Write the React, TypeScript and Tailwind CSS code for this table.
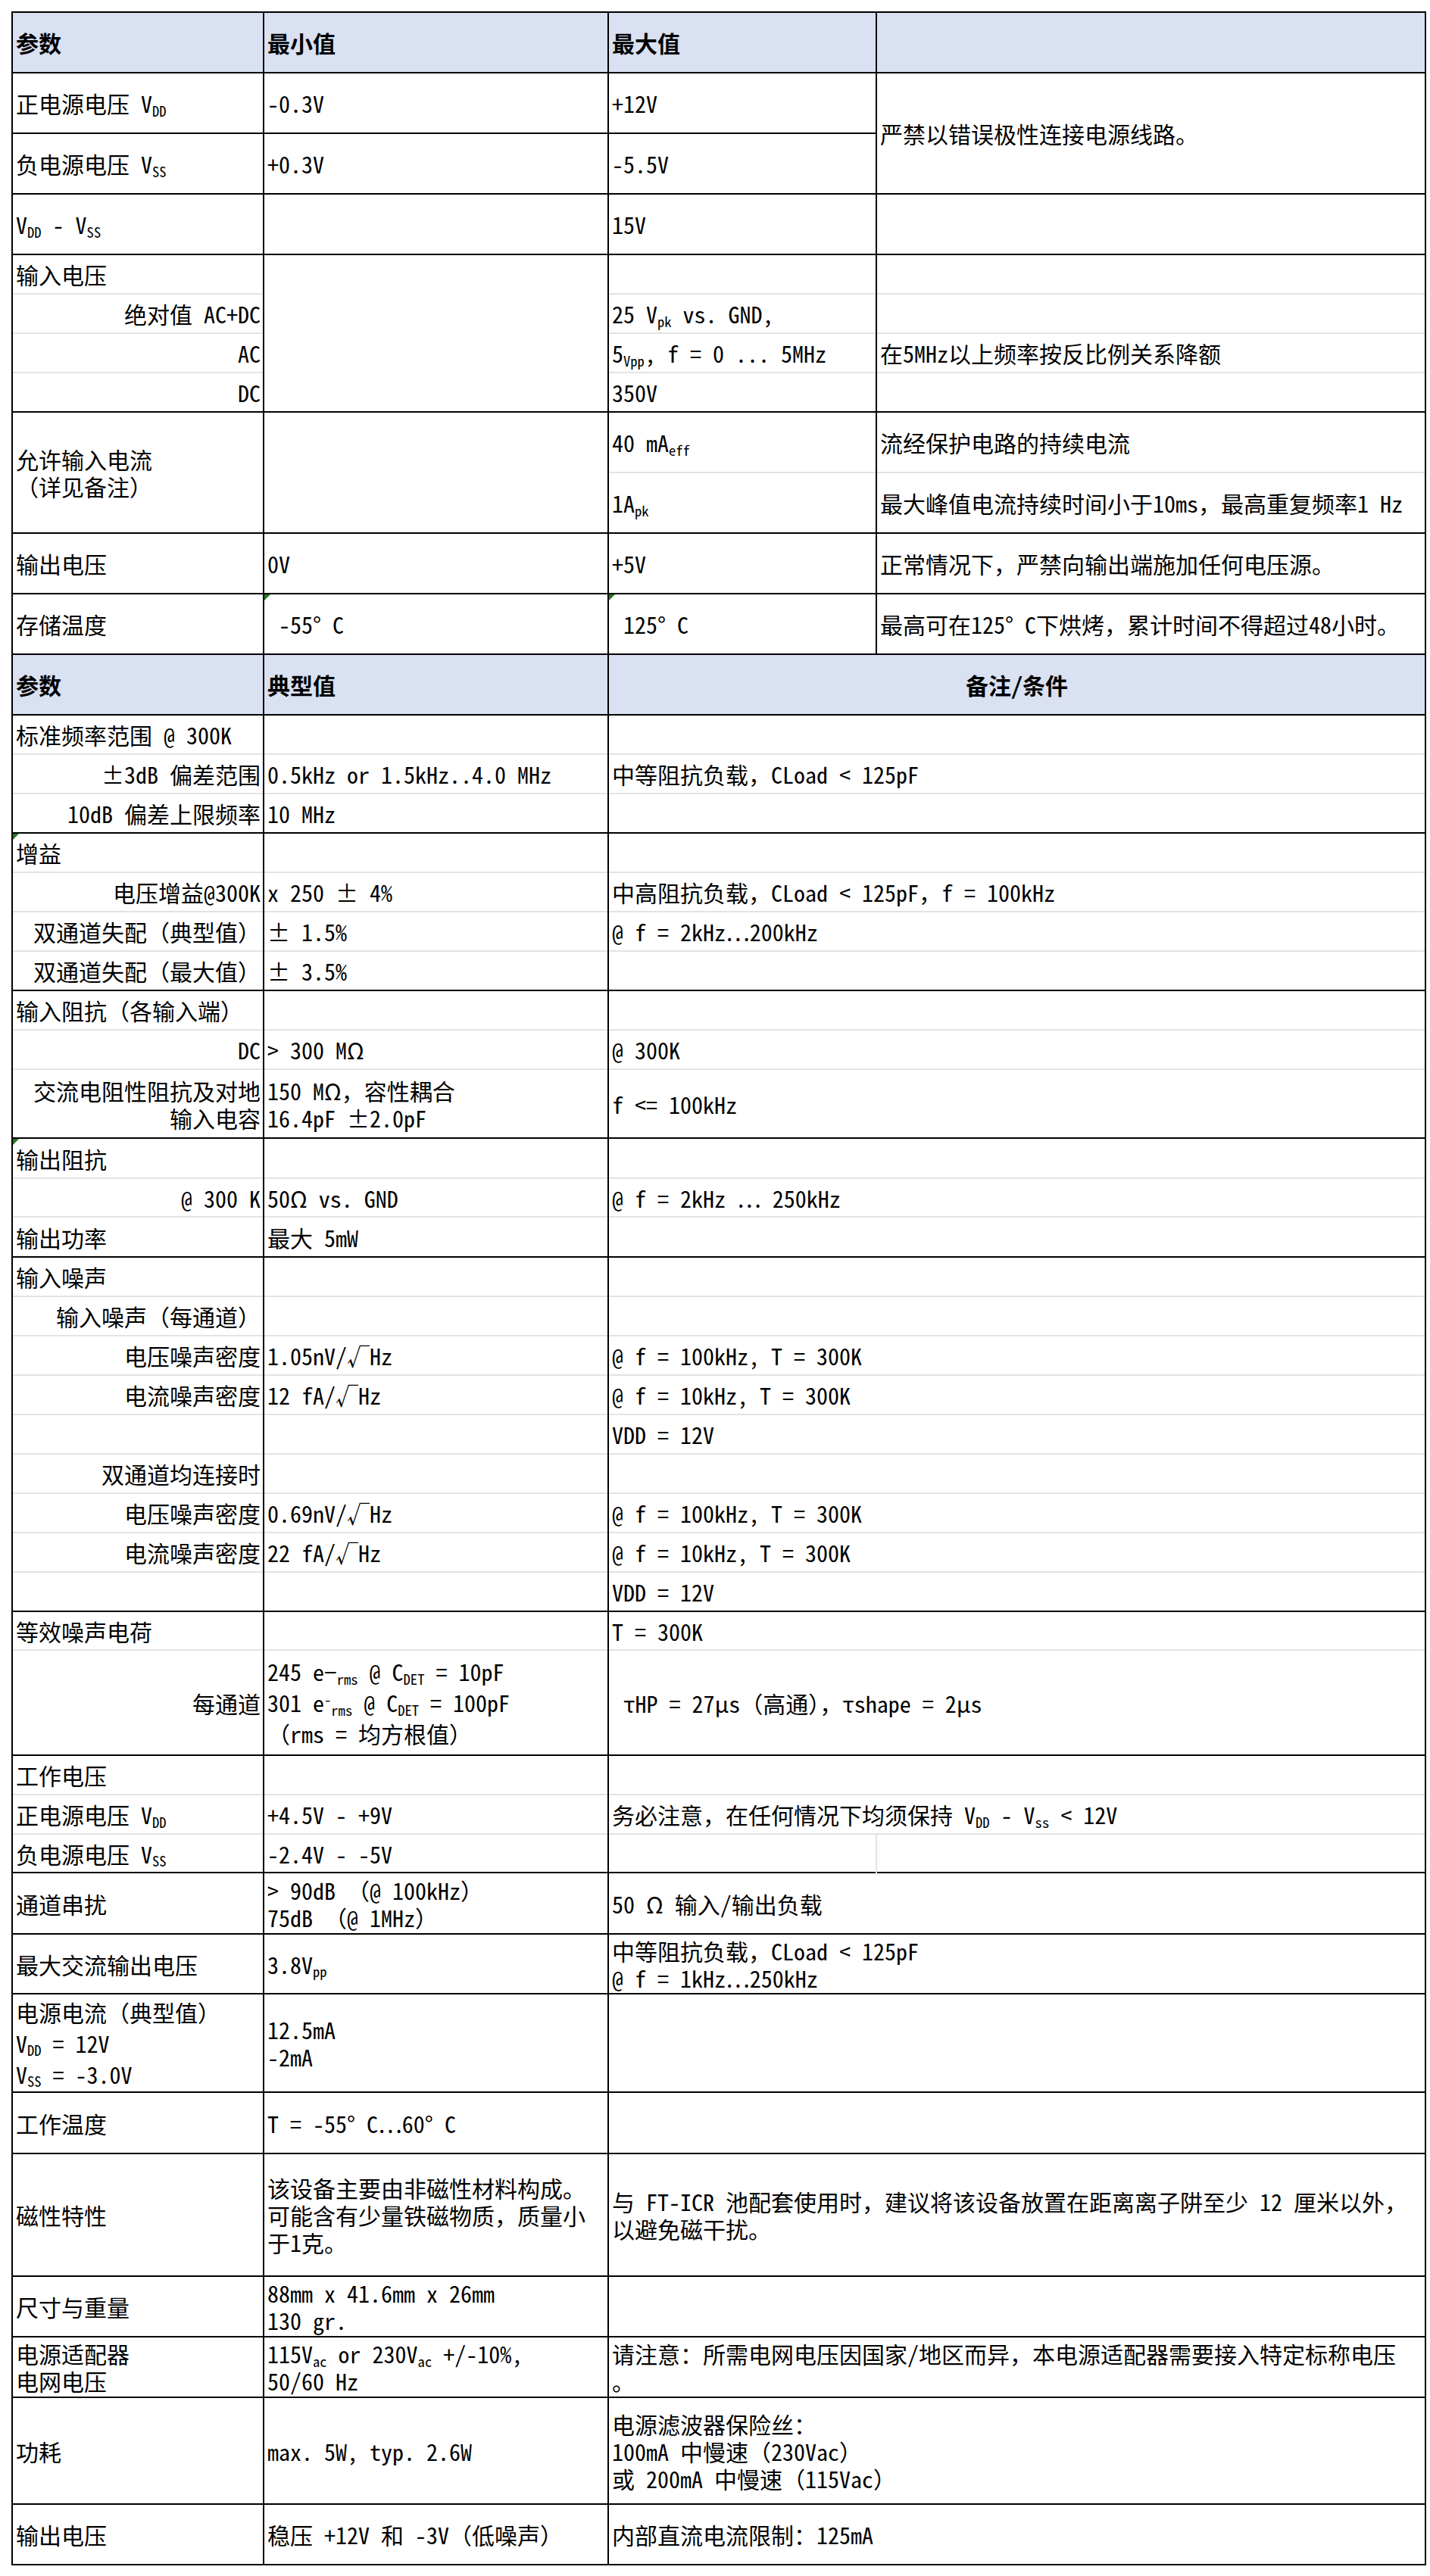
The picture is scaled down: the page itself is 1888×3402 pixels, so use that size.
import React from "react";

type TdProps = {
  children?: React.ReactNode;
  t?: "k" | "g" | "n";
  l?: boolean;
  lg?: boolean;
  r?: boolean;
  b?: boolean;
  a?: "l" | "r" | "c";
  rs?: number;
  cs?: number;
  tri?: boolean;
  hd?: boolean;
  lh?: string;
};

function Td({ children, t = "k", l = true, lg = false, r = false, b = false, a = "l", rs, cs, tri, hd, lh }: TdProps) {
  const cls = [
    "relative p-0 align-middle whitespace-pre",
    lh ? lh : "leading-[36px]",
    t === "k" ? "border-t-2 border-t-black" : t === "g" ? "border-t-2 border-t-[#e3e3e3]" : "",
    l ? (lg ? "border-l-2 border-l-[#e3e3e3]" : "border-l-2 border-l-black") : "",
    r ? "border-r-2 border-r-black" : "",
    b ? "border-b-2 border-b-black" : "",
    a === "r" ? "text-right pr-[3px] pl-[4px]" : a === "c" ? "text-center" : "text-left pl-[4px] pr-[2px]",
    hd ? "bg-[#d9e1f2] font-bold" : "",
  ].join(" ");
  return (
    <td className={cls} rowSpan={rs} colSpan={cs}>
      {tri ? (
        <span className="absolute left-0 top-0 w-0 h-0 border-t-[8px] border-t-[#1f7a1f] border-r-[8px] border-r-transparent" />
      ) : null}
      {children}
    </td>
  );
}

const S = ({ children }: { children: React.ReactNode }) => <sub className="text-[0.62em]">{children}</sub>;
const U = ({ children }: { children: React.ReactNode }) => <sup className="text-[0.62em]">{children}</sup>;

export default function App() {
  return (
    <div className="w-[1888px] min-h-[3402px] bg-white pt-[15px] pl-[15px] text-black text-[30px] font-['Noto_Sans_Mono_CJK_SC','Noto_Sans_CJK_SC',monospace]">
      <table className="border-collapse table-fixed w-[1866px]">
        <colgroup>
          <col className="w-[332px]" />
          <col className="w-[455px]" />
          <col className="w-[354px]" />
          <col className="w-[725px]" />
        </colgroup>
        <tbody>
          {/* Table 1 header */}
          <tr className="h-[80px]">
            <Td hd>参数</Td>
            <Td hd>最小值</Td>
            <Td hd>最大值</Td>
            <Td hd r></Td>
          </tr>
          <tr className="h-[80px]">
            <Td>正电源电压 V<S>DD</S></Td>
            <Td>-0.3V</Td>
            <Td>+12V</Td>
            <Td rs={2} r>严禁以错误极性连接电源线路。</Td>
          </tr>
          <tr className="h-[80px]">
            <Td>负电源电压 V<S>SS</S></Td>
            <Td>+0.3V</Td>
            <Td>-5.5V</Td>
          </tr>
          <tr className="h-[80px]">
            <Td>V<S>DD</S> - V<S>SS</S></Td>
            <Td></Td>
            <Td>15V</Td>
            <Td r></Td>
          </tr>
          {/* 输入电压 */}
          <tr className="h-[52px]">
            <Td>输入电压</Td>
            <Td rs={4}></Td>
            <Td></Td>
            <Td r></Td>
          </tr>
          <tr className="h-[52px]">
            <Td t="g" a="r">绝对值 AC+DC</Td>
            <Td t="g">25 V<S>pk</S> vs. GND,</Td>
            <Td t="g" r></Td>
          </tr>
          <tr className="h-[52px]">
            <Td t="g" a="r">AC</Td>
            <Td t="g">5<S>Vpp</S>, f = 0 ... 5MHz</Td>
            <Td t="g" r>在5MHz以上频率按反比例关系降额</Td>
          </tr>
          <tr className="h-[52px]">
            <Td t="g" a="r">DC</Td>
            <Td t="g">350V</Td>
            <Td t="g" r></Td>
          </tr>
          {/* 允许输入电流 */}
          <tr className="h-[80px]">
            <Td rs={2}>{"允许输入电流\n（详见备注）"}</Td>
            <Td rs={2}></Td>
            <Td>40 mA<S>eff</S></Td>
            <Td r>流经保护电路的持续电流</Td>
          </tr>
          <tr className="h-[80px]">
            <Td t="g">1A<S>pk</S></Td>
            <Td t="g" r>最大峰值电流持续时间小于10ms，最高重复频率1 Hz</Td>
          </tr>
          <tr className="h-[80px]">
            <Td>输出电压</Td>
            <Td>0V</Td>
            <Td>+5V</Td>
            <Td r>正常情况下，严禁向输出端施加任何电压源。</Td>
          </tr>
          <tr className="h-[80px]">
            <Td>存储温度</Td>
            <Td tri> -55° C</Td>
            <Td tri> 125° C</Td>
            <Td r>最高可在125° C下烘烤，累计时间不得超过48小时。</Td>
          </tr>

          {/* Table 2 header */}
          <tr className="h-[80px]">
            <Td hd>参数</Td>
            <Td hd>典型值</Td>
            <Td hd cs={2} a="c" r>备注/条件</Td>
          </tr>
          {/* 标准频率范围 */}
          <tr className="h-[52px]">
            <Td>标准频率范围 @ 300K</Td>
            <Td></Td>
            <Td cs={2} r></Td>
          </tr>
          <tr className="h-[52px]">
            <Td t="g" a="r">±3dB 偏差范围</Td>
            <Td t="g">0.5kHz or 1.5kHz..4.0 MHz</Td>
            <Td t="g" cs={2} r>中等阻抗负载，CLoad &lt; 125pF</Td>
          </tr>
          <tr className="h-[52px]">
            <Td t="g" a="r">10dB 偏差上限频率</Td>
            <Td t="g">10 MHz</Td>
            <Td t="g" cs={2} r></Td>
          </tr>
          {/* 增益 */}
          <tr className="h-[52px]">
            <Td tri>增益</Td>
            <Td></Td>
            <Td cs={2} r></Td>
          </tr>
          <tr className="h-[52px]">
            <Td t="g" a="r">电压增益@300K</Td>
            <Td t="g">x 250 ± 4%</Td>
            <Td t="g" cs={2} r>中高阻抗负载，CLoad &lt; 125pF，f = 100kHz</Td>
          </tr>
          <tr className="h-[52px]">
            <Td t="g" a="r">双通道失配（典型值）</Td>
            <Td t="g">± 1.5%</Td>
            <Td t="g" cs={2} r>@ f = 2kHz…200kHz</Td>
          </tr>
          <tr className="h-[52px]">
            <Td t="g" a="r">双通道失配（最大值）</Td>
            <Td t="g">± 3.5%</Td>
            <Td t="g" cs={2} r></Td>
          </tr>
          {/* 输入阻抗 */}
          <tr className="h-[52px]">
            <Td>输入阻抗（各输入端）</Td>
            <Td></Td>
            <Td cs={2} r></Td>
          </tr>
          <tr className="h-[52px]">
            <Td t="g" a="r">DC</Td>
            <Td t="g">&gt; 300 MΩ</Td>
            <Td t="g" cs={2} r>@ 300K</Td>
          </tr>
          <tr className="h-[91px]">
            <Td t="g" a="r">{"交流电阻性阻抗及对地\n输入电容"}</Td>
            <Td t="g">{"150 MΩ，容性耦合\n16.4pF ±2.0pF"}</Td>
            <Td t="g" cs={2} r>f &lt;= 100kHz</Td>
          </tr>
          {/* 输出阻抗 */}
          <tr className="h-[53px]">
            <Td tri>输出阻抗</Td>
            <Td></Td>
            <Td cs={2} r></Td>
          </tr>
          <tr className="h-[51px]">
            <Td t="g" a="r">@ 300 K</Td>
            <Td t="g">50Ω vs. GND</Td>
            <Td t="g" cs={2} r>@ f = 2kHz … 250kHz</Td>
          </tr>
          <tr className="h-[53px]">
            <Td t="g">输出功率</Td>
            <Td t="g">最大 5mW</Td>
            <Td t="g" cs={2} r></Td>
          </tr>
          {/* 输入噪声 */}
          <tr className="h-[52px]">
            <Td>输入噪声</Td>
            <Td></Td>
            <Td cs={2} r></Td>
          </tr>
          <tr className="h-[52px]">
            <Td t="g" a="r">输入噪声（每通道）</Td>
            <Td t="g"></Td>
            <Td t="g" cs={2} r></Td>
          </tr>
          <tr className="h-[52px]">
            <Td t="g" a="r">电压噪声密度</Td>
            <Td t="g">1.05nV/√Hz</Td>
            <Td t="g" cs={2} r>@ f = 100kHz, T = 300K</Td>
          </tr>
          <tr className="h-[52px]">
            <Td t="g" a="r">电流噪声密度</Td>
            <Td t="g">12 fA/√Hz</Td>
            <Td t="g" cs={2} r>@ f = 10kHz, T = 300K</Td>
          </tr>
          <tr className="h-[52px]">
            <Td t="g"></Td>
            <Td t="g"></Td>
            <Td t="g" cs={2} r>VDD = 12V</Td>
          </tr>
          <tr className="h-[52px]">
            <Td t="g" a="r">双通道均连接时</Td>
            <Td t="g"></Td>
            <Td t="g" cs={2} r></Td>
          </tr>
          <tr className="h-[52px]">
            <Td t="g" a="r">电压噪声密度</Td>
            <Td t="g">0.69nV/√Hz</Td>
            <Td t="g" cs={2} r>@ f = 100kHz, T = 300K</Td>
          </tr>
          <tr className="h-[52px]">
            <Td t="g" a="r">电流噪声密度</Td>
            <Td t="g">22 fA/√Hz</Td>
            <Td t="g" cs={2} r>@ f = 10kHz, T = 300K</Td>
          </tr>
          <tr className="h-[52px]">
            <Td t="g"></Td>
            <Td t="g"></Td>
            <Td t="g" cs={2} r>VDD = 12V</Td>
          </tr>
          {/* 等效噪声电荷 */}
          <tr className="h-[51px]">
            <Td>等效噪声电荷</Td>
            <Td></Td>
            <Td cs={2} r>T = 300K</Td>
          </tr>
          <tr className="h-[139px]">
            <Td t="g" a="r">每通道</Td>
            <Td t="g" lh="leading-[41px]">
              245 e−<S>rms</S> @ C<S>DET</S> = 10pF{"\n"}301 e<U>-</U><S>rms</S> @ C<S>DET</S> = 100pF{"\n"}（rms = 均方根值）
            </Td>
            <Td t="g" cs={2} r> τHP = 27μs（高通），τshape = 2μs</Td>
          </tr>
          {/* 工作电压 */}
          <tr className="h-[52px]">
            <Td>工作电压</Td>
            <Td></Td>
            <Td cs={2} r></Td>
          </tr>
          <tr className="h-[52px]">
            <Td t="g">正电源电压 V<S>DD</S></Td>
            <Td t="g">+4.5V - +9V</Td>
            <Td t="g" cs={2} r>务必注意，在任何情况下均须保持 V<S>DD</S> - V<S>ss</S> &lt; 12V</Td>
          </tr>
          <tr className="h-[51px]">
            <Td t="g">负电源电压 V<S>SS</S></Td>
            <Td t="g">-2.4V - -5V</Td>
            <Td t="g"></Td>
            <Td t="g" lg r></Td>
          </tr>
          <tr className="h-[81px]">
            <Td>通道串扰</Td>
            <Td>{"> 90dB （@ 100kHz）\n75dB （@ 1MHz）"}</Td>
            <Td cs={2} r>50 Ω 输入/输出负载</Td>
          </tr>
          <tr className="h-[79px]">
            <Td>最大交流输出电压</Td>
            <Td>3.8V<S>pp</S></Td>
            <Td cs={2} r>{"中等阻抗负载，CLoad < 125pF\n@ f = 1kHz…250kHz"}</Td>
          </tr>
          <tr className="h-[130px]">
            <Td lh="leading-[41px]">
              电源电流（典型值）{"\n"}V<S>DD</S> = 12V{"\n"}V<S>SS</S> = -3.0V
            </Td>
            <Td>{"12.5mA\n-2mA"}</Td>
            <Td cs={2} r></Td>
          </tr>
          <tr className="h-[81px]">
            <Td>工作温度</Td>
            <Td>T = -55° C…60° C</Td>
            <Td cs={2} r></Td>
          </tr>
          <tr className="h-[162px]">
            <Td>磁性特性</Td>
            <Td>{"该设备主要由非磁性材料构成。\n可能含有少量铁磁物质，质量小\n于1克。"}</Td>
            <Td cs={2} r>{"与 FT-ICR 池配套使用时，建议将该设备放置在距离离子阱至少 12 厘米以外，\n以避免磁干扰。"}</Td>
          </tr>
          <tr className="h-[80px]">
            <Td>尺寸与重量</Td>
            <Td>{"88mm x 41.6mm x 26mm\n130 gr."}</Td>
            <Td cs={2} r></Td>
          </tr>
          <tr className="h-[80px]">
            <Td>{"电源适配器\n电网电压"}</Td>
            <Td>
              115V<S>ac</S> or 230V<S>ac</S> +/-10%,{"\n"}50/60 Hz
            </Td>
            <Td cs={2} r>{"请注意：所需电网电压因国家/地区而异，本电源适配器需要接入特定标称电压\n。"}</Td>
          </tr>
          <tr className="h-[141px]">
            <Td>功耗</Td>
            <Td>max. 5W, typ. 2.6W</Td>
            <Td cs={2} r>{"电源滤波器保险丝：\n100mA 中慢速（230Vac）\n或 200mA 中慢速（115Vac）"}</Td>
          </tr>
          <tr className="h-[80px]">
            <Td b>输出电压</Td>
            <Td b>稳压 +12V 和 -3V（低噪声）</Td>
            <Td b cs={2} r>内部直流电流限制：125mA</Td>
          </tr>
        </tbody>
      </table>
    </div>
  );
}
